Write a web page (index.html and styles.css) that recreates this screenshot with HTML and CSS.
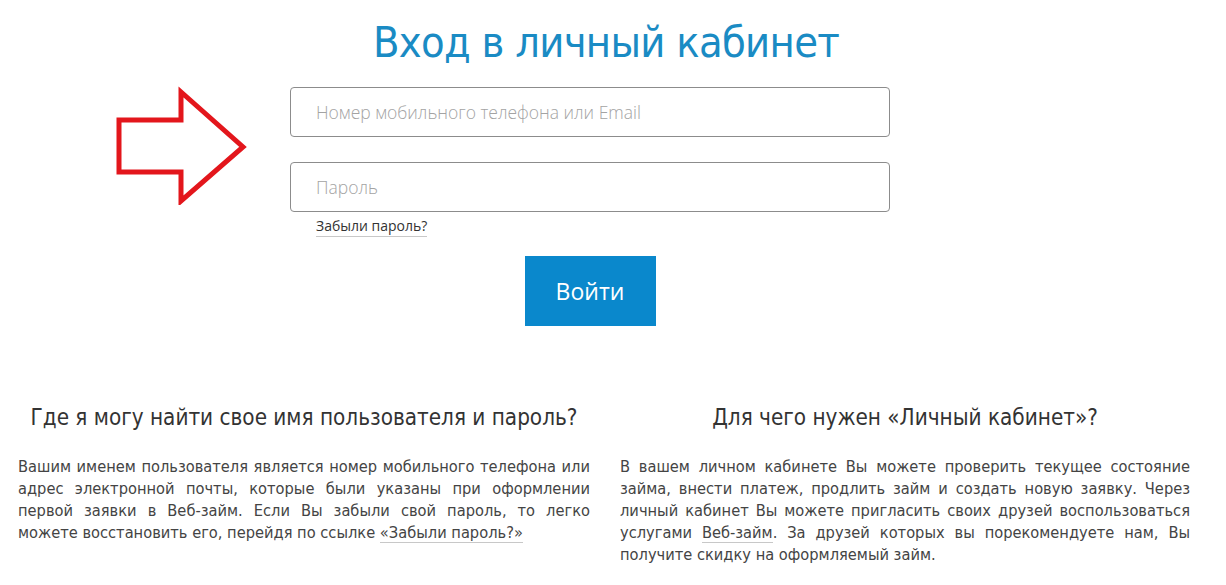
FILE: index.html
```html
<!DOCTYPE html>
<html lang="ru">
<head>
<meta charset="utf-8">
<title>Вход в личный кабинет</title>
<link rel="stylesheet" href="styles.css">
</head>
<body>
<main class="page">
  <h1 class="title">Вход в личный кабинет</h1>
  <div class="login-row">
    <svg class="arrow" width="135" height="120" viewBox="0 0 135 120" aria-hidden="true">
      <polygon points="6,35 68,35 68,7 130,62 68,116 68,87 6,87" fill="none" stroke="#e3161c" stroke-width="5" stroke-linejoin="miter"/>
    </svg>
    <form class="login-form">
      <input class="field" type="text" placeholder="Номер мобильного телефона или Email">
      <input class="field field-pass" type="password" placeholder="Пароль">
      <a class="forgot" href="#">Забыли пароль?</a>
      <div class="submit-wrap"><button class="submit" type="button">Войти</button></div>
    </form>
  </div>
  <section class="info">
    <div class="info-col">
      <h2 class="info-title">Где я могу найти свое имя пользователя и пароль?</h2>
      <p class="info-text">Вашим именем пользователя является номер мобильного телефона или адрес электронной почты, которые были указаны при оформлении первой заявки в Веб-займ. Если Вы забыли свой пароль, то легко можете восстановить его, перейдя по ссылке <a class="text-link" href="#">«Забыли пароль?»</a></p>
    </div>
    <div class="info-col">
      <h2 class="info-title">Для чего нужен «Личный кабинет»?</h2>
      <p class="info-text">В вашем личном кабинете Вы можете проверить текущее состояние займа, внести платеж, продлить займ и создать новую заявку. Через личный кабинет Вы можете пригласить своих друзей воспользоваться услугами <a class="text-link" href="#">Веб-займ</a>. За друзей которых вы порекомендуете нам, Вы получите скидку на оформляемый займ.</p>
    </div>
  </section>
</main>
</body>
</html>
```

FILE: styles.css
```css
* { box-sizing: border-box; }
html, body { margin: 0; padding: 0; background: #fff; }
body {
  font-family: "DejaVu Sans Condensed", "Liberation Sans Narrow", sans-serif;
  color: #333;
}
.page {
  width: 1172px;
  margin-left: 18px;
}
.title {
  margin: 0;
  padding-top: 14px;
  padding-left: 4px;
  text-align: center;
  font-family: "DejaVu Sans Condensed", sans-serif;
  font-weight: 400;
  font-size: 43px;
  letter-spacing: -0.7px;
  line-height: 56px;
  color: #1a8bc4;
}
.login-row {
  display: flex;
  align-items: flex-start;
  margin-top: 17px;
}
.arrow {
  margin-left: 95px;
  margin-top: -2px;
  flex: none;
}
.login-form {
  margin-left: 42px;
  width: 600px;
  display: flex;
  flex-direction: column;
}
.field {
  width: 600px;
  height: 50px;
  border: 1px solid #8c8c8c;
  border-radius: 4px;
  padding: 0 25px;
  font-family: "Open Sans", sans-serif;
  font-weight: 300;
  font-size: 17.5px;
  color: #333;
  outline: none;
}
.field::placeholder { color: #a3a3a3; }
.field-pass { margin-top: 25px; }
.forgot {
  align-self: flex-start;
  margin-left: 26px;
  margin-top: 4px;
  font-family: "Open Sans", sans-serif;
  font-size: 14px;
  line-height: 20px;
  color: #333;
  text-decoration: none;
  border-bottom: 1px solid #c8c8c8;
}
.submit-wrap {
  display: flex;
  justify-content: center;
  margin-top: 19px;
}
.submit {
  width: 131px;
  height: 70px;
  border: 0;
  background: #0a88cc;
  color: #fff;
  font-family: "Open Sans", sans-serif;
  font-size: 23px;
  font-weight: 400;
  cursor: pointer;
}
.info {
  display: grid;
  grid-template-columns: 572px 570px;
  column-gap: 30px;
  margin-top: 76px;
}
.info-title {
  margin: 0;
  text-align: center;
  font-family: "DejaVu Sans Condensed", sans-serif;
  font-weight: 400;
  font-size: 22.3px;
  line-height: 30px;
  color: #333;
}
.info-text {
  margin: 24px 0 0;
  text-align: justify;
  font-size: 16.3px;
  line-height: 22px;
  color: #444;
}
.text-link {
  color: #444;
  text-decoration: none;
  border-bottom: 1px solid #c8c8c8;
}
```
